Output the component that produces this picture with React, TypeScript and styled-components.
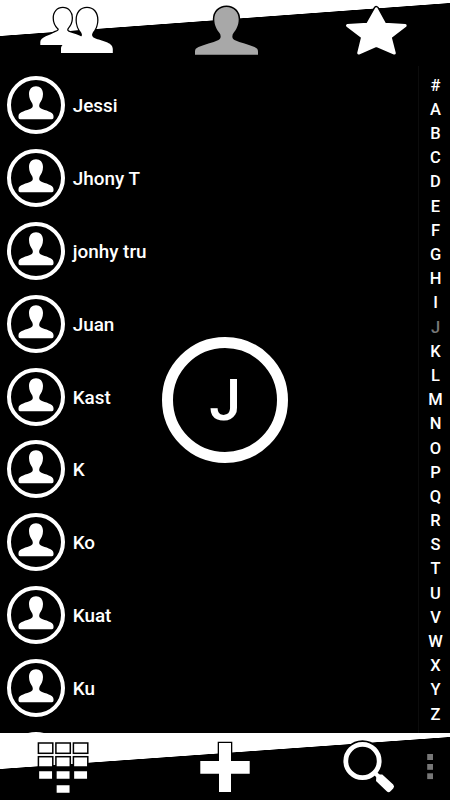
import React from 'react';
import styled, { createGlobalStyle } from 'styled-components';

const GlobalStyle = createGlobalStyle`
  body { margin: 0; background: #000; overflow: hidden; }
  * { box-sizing: border-box; }
`;

const Screen = styled.div`
  width: 450px;
  height: 800px;
  display: flex;
  flex-direction: column;
  background: #000;
  color: #fff;
  font-family: Roboto, sans-serif;
  font-weight: 500;
  overflow: hidden;
  position: relative;
`;

const Header = styled.header`
  flex: 0 0 66px;
  display: grid;
  grid-template-columns: repeat(3, 150px);
  background: linear-gradient(to bottom right, #fff 49.5%, #000 50.5%) 0 3px / 450px 33px no-repeat,
    linear-gradient(#fff, #fff) 0 0 / 450px 3px no-repeat;
`;

const Tab = styled.button`
  border: 0;
  padding: 0;
  background: none;
  height: 66px;
  svg { display: block; }
`;

const Main = styled.main`
  flex: 0 0 667px;
  display: flex;
  overflow: hidden;
`;

const ContactList = styled.ul`
  list-style: none;
  margin: 0;
  padding: 2.8px 0 0 7px;
  width: 418px;
`;

const ContactRow = styled.li`
  height: 72.83px;
  display: flex;
  align-items: center;
  gap: 7.7px;
  font-size: 18.9px;
`;

const Avatar = styled.span`
  width: 58px;
  height: 58px;
  flex: none;
  border: 4px solid #fff;
  border-radius: 50%;
  display: grid;
  place-items: center;
`;

const Name = styled.span`
  padding-top: 1px;
`;

const AlphabetIndex = styled.nav`
  width: 32px;
  padding: 7.7px 0 0 2px;
  border-left: 1px solid #0c0c0c;
  display: flex;
  flex-direction: column;
  align-items: center;
`;

const Letter = styled.span<{ $current: boolean }>`
  flex: none;
  height: 24.19px;
  line-height: 24.19px;
  font-size: 16.5px;
  color: ${p => (p.$current ? '#777' : '#fff')};
`;

const LetterBubble = styled.div`
  position: absolute;
  left: 162px;
  top: 337px;
  width: 126px;
  height: 126px;
  border: 11px solid #fff;
  border-radius: 50%;
  display: flex;
  align-items: center;
  justify-content: center;
  font-size: 57px;
  line-height: 1;
`;

const Footer = styled.footer`
  flex: 0 0 67px;
  display: grid;
  grid-template-columns: 150px 150px 110px 40px;
  background: linear-gradient(to bottom right, #fff 49.5%, #000 50.5%) 0 4px / 450px 32px no-repeat,
    linear-gradient(#fff, #fff) 0 0 / 450px 4px no-repeat;
`;

const bust =
  'M32 1.6 C39 1.6 44.2 6.5 44.2 14 C44.2 20.5 41.5 24.5 39 27.8 C37.4 30 37.2 33 40 34.6 C46 37.5 54 38.8 60 41.8 C62.5 43 63.5 44 63.5 46.5 V49.5 H.5 V46.5 C.5 44 1.5 43 4 41.8 C10 38.8 18 37.5 24 34.6 C26.8 33 26.6 30 25 27.8 C22.5 24.5 19.8 20.5 19.8 14 C19.8 6.5 25 1.6 32 1.6Z';

const groupBack =
  'M62.8 8 C68 8 71.7 12 71.7 18 C71.7 23 69.5 26 67.8 28 C66.5 30 67 31.2 70 32.2 C74 33.6 79 34.8 82 36.8 L80 45 H40.3 V42 C40.3 37 50 35 55.5 32 C59 30.6 59.5 29.5 58 28 C56 26 53.9 23 53.9 18 C53.9 12 57.6 8 62.8 8Z';
const groupFront =
  'M87 8 C93 8 97.2 12.5 97.2 20 C97.2 26 95 29.5 92.8 32.5 C91.3 35 92 37 95 38.3 C101 40.8 112.8 42 112.8 49 V53 H61 V49 C61 42 73 40.8 79 38.3 C82 37 82.7 35 81.2 32.5 C79 29.5 76.8 26 76.8 20 C76.8 12.5 81 8 87 8Z';

const GroupIcon = () => (
  <svg width="150" height="66" fill="#fff">
    <g stroke="#000" strokeWidth="2.6">
      <path d={groupBack} />
      <path d={groupFront} />
    </g>
    <path d={groupBack} />
    <path d={groupFront} />
  </svg>
);

const PersonIcon = () => (
  <svg width="150" height="66" fill="#a8a8a8" stroke="#000" strokeWidth="3" paintOrder="stroke">
    <path transform="translate(44.5 5.3)" d={bust} />
  </svg>
);

const StarIcon = () => (
  <svg width="150" height="66" fill="#fff" strokeLinejoin="round">
    <path
      stroke="#000"
      strokeWidth="6"
      d="M76.3 9 L85 24 L105 25.5 L90 37 L94 53 L76.3 46 L59 53 L62.5 37 L47.5 25.5 L67.5 24Z"
    />
    <path
      stroke="#fff"
      strokeWidth="3"
      d="M76.3 8.9 L84.7 24.3 L105.2 25.6 L90.2 37.1 L94.3 53 L76.3 45.4 L58.7 53 L62.6 37.1 L47.5 25.6 L67.7 24.3Z"
    />
  </svg>
);

const AvatarIcon = () => (
  <svg width="50" height="50" fill="#fff">
    <path d="M25 6.2 C29.2 6.2 32 9 32 14 C32 18.5 30.2 20.8 28.8 23.2 C27.8 25.5 27.8 27.4 30 28.6 C34 30.6 42.5 31.8 42.5 36 V37.5 Q42.5 39.2 41 39.2 H9 Q7.5 39.2 7.5 37.5 V36 C7.5 31.8 16 30.6 20 28.6 C22.2 27.4 22.2 25.5 21.2 23.2 C19.8 20.8 18 18.5 18 14 C18 9 20.8 6.2 25 6.2Z" />
  </svg>
);

const keys = [
  [38, 10], [55.5, 10], [73, 10],
  [38, 23.7], [55.5, 23.7], [73, 23.7],
  [38, 37.5], [55.5, 37.5], [73, 37.5],
  [55.5, 51.5],
];

const KeypadIcon = () => (
  <svg width="150" height="67" fill="#fff" stroke="#000" strokeWidth="1.5">
    {keys.map(([x, y]) => (
      <rect key={`${x}-${y}`} x={x + 0.4} y={y} width="14.4" height={y < 30 ? 10.3 : 9} />
    ))}
  </svg>
);

const PlusIcon = () => (
  <svg width="150" height="67" fill="#fff" stroke="#000" strokeWidth="2.6" paintOrder="stroke">
    <path d="M69 10H81V28H99.7V40.7H81V59H69V40.7H50.3V28H69Z" />
  </svg>
);

const SearchIcon = () => (
  <svg width="110" height="67" fill="none">
    <circle cx="62.5" cy="28" r="17.5" fill="#000" stroke="#000" strokeWidth="6.5" />
    <circle cx="62.5" cy="28" r="16.7" stroke="#fff" strokeWidth="4.8" />
    <path d="M74 39L79 44" stroke="#fff" strokeWidth="4" />
    <path d="M76.4 43L78 41.5H82.3L93.2 51.6Q95 53.5 93.2 55.4L90.5 58.3Q88.6 60 86.7 58.3L76 48Z" fill="#fff" />
  </svg>
);

const MoreIcon = () => (
  <svg width="40" height="67" fill="#777">
    <rect x="17.2" y="21" width="5.8" height="6" />
    <rect x="17.2" y="31" width="5.8" height="5.8" />
    <rect x="17.2" y="40.3" width="5.8" height="5.8" />
  </svg>
);

const contacts = ['Jessi', 'Jhony T', 'jonhy tru', 'Juan', 'Kast', 'K', 'Ko', 'Kuat', 'Ku', ''];
const letters = '#ABCDEFGHIJKLMNOPQRSTUVWXYZ'.split('');
const currentLetter = 'J';

export default function App() {
  return (
    <Screen>
      <GlobalStyle />
      <Header>
        <Tab aria-label="Groups"><GroupIcon /></Tab>
        <Tab aria-label="Contacts"><PersonIcon /></Tab>
        <Tab aria-label="Favorites"><StarIcon /></Tab>
      </Header>
      <Main>
        <ContactList>
          {contacts.map((name, i) => (
            <ContactRow key={i}>
              <Avatar><AvatarIcon /></Avatar>
              <Name>{name}</Name>
            </ContactRow>
          ))}
        </ContactList>
        <AlphabetIndex>
          {letters.map(l => (
            <Letter key={l} $current={l === currentLetter}>{l}</Letter>
          ))}
        </AlphabetIndex>
      </Main>
      <Footer>
        <Tab aria-label="Keypad"><KeypadIcon /></Tab>
        <Tab aria-label="Add"><PlusIcon /></Tab>
        <Tab aria-label="Search"><SearchIcon /></Tab>
        <Tab aria-label="More"><MoreIcon /></Tab>
      </Footer>
      <LetterBubble>{currentLetter}</LetterBubble>
    </Screen>
  );
}
